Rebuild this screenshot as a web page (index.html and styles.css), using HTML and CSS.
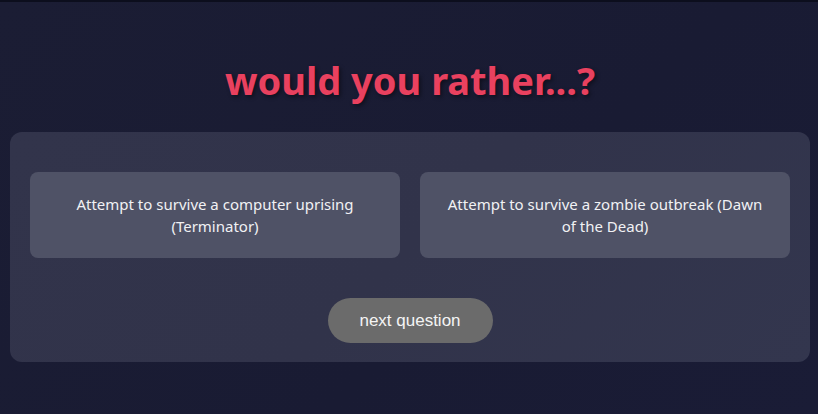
FILE: index.html
```html
<!DOCTYPE html>
<html lang="en">
<head>
<meta charset="utf-8">
<title>Would you rather</title>
<link rel="stylesheet" href="styles.css">
</head>
<body>
<main class="page">
  <h1 class="title">would you rather...?</h1>
  <section class="card">
    <div class="options">
      <button class="option">Attempt to survive a computer uprising (Terminator)</button>
      <button class="option">Attempt to survive a zombie outbreak (Dawn of the Dead)</button>
    </div>
    <button class="next">next question</button>
  </section>
</main>
</body>
</html>
```

FILE: styles.css
```css
html, body {
  margin: 0;
  padding: 0;
  height: 100%;
}
body {
  background: linear-gradient(135deg, #1b1d34 0%, #191b33 60%, #1a1c36 100%);
  border-top: 2px solid #0c0e1d;
  box-sizing: border-box;
  font-family: "Noto Sans", "Open Sans", sans-serif;
}
.page {
  padding: 0 8px 0 10px;
  display: flex;
  flex-direction: column;
  align-items: stretch;
}
.title {
  margin: 54px 0 0;
  height: 76px;
  text-align: center;
  font-size: 38px;
  font-weight: 700;
  line-height: 48px;
  color: #e9415f;
  text-shadow: 2px 2px 4px rgba(0, 0, 0, 0.45);
}
.card {
  background: linear-gradient(135deg, #32344b 0%, #31334a 50%, #33364e 100%);
  border-radius: 12px;
  padding: 40px 20px 19px;
  display: flex;
  flex-direction: column;
  align-items: center;
  gap: 40px;
}
.options {
  display: grid;
  grid-template-columns: 1fr 1fr;
  gap: 20px;
  width: 100%;
}
.option {
  background: #4f5266;
  border: none;
  border-radius: 8px;
  height: 86px;
  padding: 0 20px;
  color: #f1f1f4;
  font-family: "Noto Sans", "Open Sans", sans-serif;
  font-size: 15px;
  line-height: 22px;
  text-align: center;
}
.next {
  width: 165px;
  height: 45px;
  border: none;
  border-radius: 23px;
  background: #6b6b6b;
  color: #f4f4f4;
  font-family: "Liberation Sans", Arial, sans-serif;
  font-size: 17px;
}
```
